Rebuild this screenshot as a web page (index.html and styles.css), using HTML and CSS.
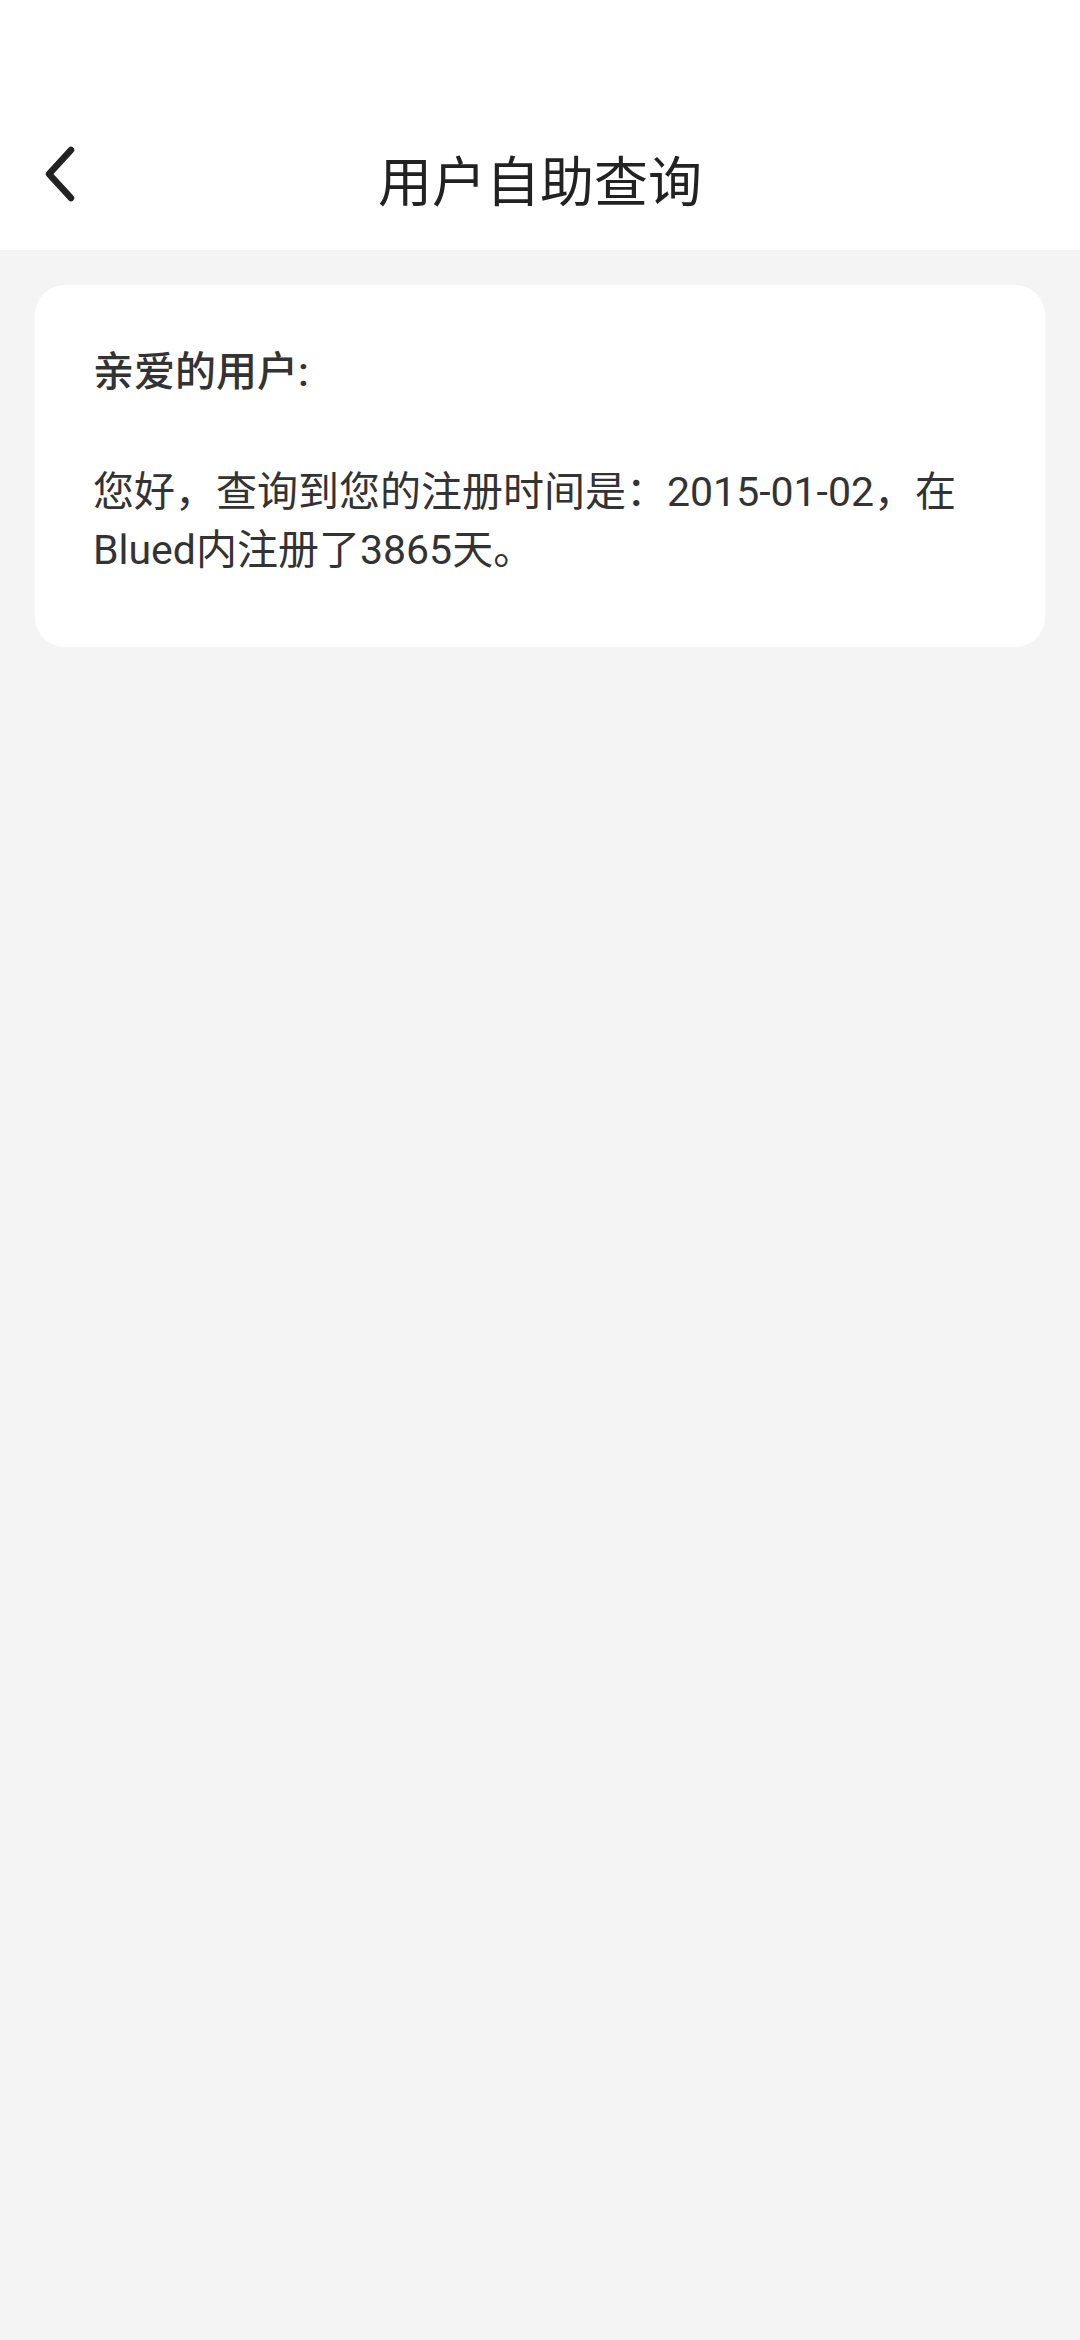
FILE: index.html
```html
<!DOCTYPE html>
<html lang="zh-CN">
<head>
  <meta charset="UTF-8">
  <title>用户自助查询</title>
  <link rel="stylesheet" href="styles.css">
</head>
<body>

  <!-- CABECERA -->
  <header class="cabecera">
    <div class="barra-estado"></div>
    <div class="barra-nav">
      <button class="volver" type="button">
        <svg width="40" height="60" viewBox="0 0 40 60">
          <polyline points="31,6 9,30 31,54" fill="none" stroke="#222" stroke-width="6.5" stroke-linecap="round" stroke-linejoin="round"/>
        </svg>
      </button>
      <h1 class="titulo">用户自助查询</h1>
    </div>
  </header>

  <!-- RESULTADO -->
  <main class="contenido">
    <div class="tarjeta">
      <p class="saludo">亲爱的用户:</p>
      <p class="texto">您好，查询到您的注册时间是：2015-01-02，在Blued内注册了3865天。</p>
    </div>
  </main>

</body>
</html>
```
FILE: styles.css
```css
body {
  margin: 0;
  background-color: #f4f4f4;
  font-family: Roboto, "Noto Sans CJK SC", sans-serif;
  color: #333;
}
.cabecera {
  background: white;
}
.barra-estado {
  height: 100px;
}
.barra-nav {
  height: 150px;
  display: flex;
  align-items: center;
  justify-content: center;
  position: relative;
}
.volver {
  position: absolute;
  left: 40px;
  top: 44px;
  background: none;
  border: none;
  padding: 0;
  display: flex;
}
.titulo {
  margin: 0;
  margin-top: 6px;
  font-size: 54px;
  font-weight: normal;
  color: #222;
  font-family: "Noto Sans CJK SC", sans-serif;
}
.contenido {
  padding: 35px;
}
.tarjeta {
  background: white;
  border-radius: 30px;
  padding: 57px 58px 68px;
  font-size: 41px;
  line-height: 60px;
}
.tarjeta p {
  margin: 0;
}
.saludo {
  margin-bottom: 61px !important;
  font-weight: 500;
}
.texto {
  line-height: 58px;
}
```
